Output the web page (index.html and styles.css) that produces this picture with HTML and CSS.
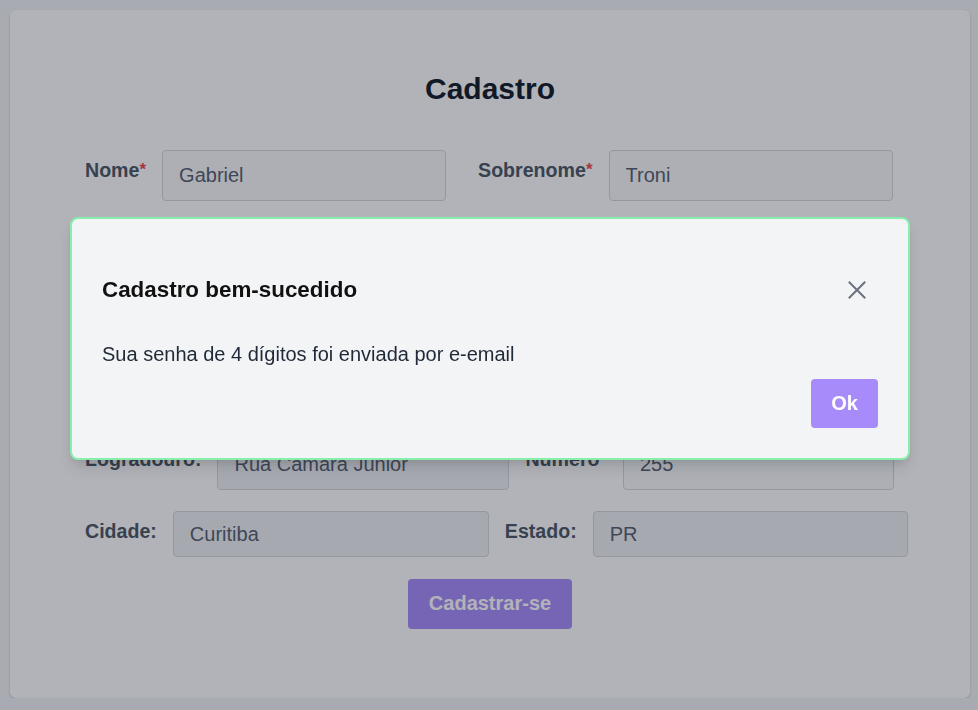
FILE: index.html
```html
<!DOCTYPE html>
<html lang="pt-BR">
<head>
<meta charset="utf-8">
<title>Cadastro</title>
<link rel="stylesheet" href="styles.css">
</head>
<body>
<main class="page">
  <form class="card">
    <h1 class="title">Cadastro</h1>
    <div class="rows">
      <div class="row row-wide-gap">
        <label class="field"><span class="label">Nome<span class="req">*</span></span><input class="input input-name" value="Gabriel"></label>
        <label class="field"><span class="label">Sobrenome<span class="req">*</span></span><input class="input input-name" value="Troni"></label>
      </div>
      <div class="row row-wide-gap">
        <label class="field"><span class="label">E-mail<span class="req">*</span></span><input class="input input-name" value="gabriel@email.com"></label>
        <label class="field"><span class="label">Telefone<span class="req">*</span></span><input class="input input-name" value="(41) 99999-0000"></label>
      </div>
      <div class="row row-wide-gap">
        <label class="field"><span class="label">CPF<span class="req">*</span></span><input class="input input-name" value="000.000.000-00"></label>
        <label class="field"><span class="label">Nascimento<span class="req">*</span></span><input class="input input-name" value="01/01/2000"></label>
      </div>
      <div class="row">
        <label class="field"><span class="label">CEP<span class="req">*</span></span><input class="input input-name" value="80000-000"></label>
      </div>
      <div class="row">
        <label class="field"><span class="label">Logradouro:</span><input class="input input-locked input-street" value="Rua Camara Junior" readonly></label>
        <label class="field"><span class="label label-number">Número</span><input class="input input-number" value="255"></label>
      </div>
      <div class="row">
        <label class="field"><span class="label">Cidade:</span><input class="input input-locked input-compact input-city" value="Curitiba" readonly></label>
        <label class="field"><span class="label">Estado:</span><input class="input input-locked input-compact input-state" value="PR" readonly></label>
      </div>
      <div class="actions">
        <button type="button" class="btn btn-submit">Cadastrar-se</button>
      </div>
    </div>
  </form>
</main>

<div class="overlay">
  <div class="modal" role="dialog">
    <div class="modal-header">
      <h2 class="modal-title">Cadastro bem-sucedido</h2>
      <button type="button" class="close" aria-label="Fechar">
        <svg width="18" height="18" viewBox="0 0 18 18" fill="none" stroke="currentColor" stroke-width="2" stroke-linecap="square"><path d="M1.5 1.5 L16.5 16.5 M16.5 1.5 L1.5 16.5"/></svg>
      </button>
    </div>
    <p class="modal-body">Sua senha de 4 dígitos foi enviada por e-email</p>
    <div class="modal-footer">
      <button type="button" class="btn">Ok</button>
    </div>
  </div>
</div>
</body>
</html>
```
FILE: styles.css
```css
* { box-sizing: border-box; }

html, body {
  margin: 0;
  padding: 0;
  background: #f3f4f6;
  font-family: "Liberation Sans", Arial, sans-serif;
}

.page {
  padding: 10px 8px 0 10px;
}

.card {
  width: 960px;
  background: #ffffff;
  border-radius: 6px;
  box-shadow: 0 1px 3px rgba(0, 0, 0, 0.12), 0 1px 2px rgba(0, 0, 0, 0.08);
  padding: 62px 75px 69px 75px;
}

.title {
  margin: 0 0 44px;
  font-size: 30px;
  line-height: 34px;
  font-weight: 700;
  color: #111827;
  text-align: center;
}

.rows {
  display: flex;
  flex-direction: column;
  gap: 21.3px;
}

.row {
  display: flex;
  align-items: flex-start;
  gap: 16px;
}

.row-wide-gap { gap: 32px; }

.field {
  display: flex;
  align-items: flex-start;
  gap: 16px;
}

.label {
  margin-top: 9px;
  font-size: 19.6px;
  line-height: 22px;
  font-weight: 700;
  color: #4b5563;
  white-space: nowrap;
}

.label-number { margin-right: 7.5px; }

.req {
  color: #ef4444;
  font-size: 17px;
  vertical-align: 2px;
}

.input {
  display: block;
  height: 51px;
  padding: 13px 16px;
  border: 1px solid #d1d5db;
  border-radius: 4px;
  background: #f9fafb;
  font-family: "Liberation Sans", Arial, sans-serif;
  font-size: 20px;
  line-height: 23px;
  color: #565e70;
  outline: none;
}

.input-locked { background: #f0f1f4; }
.input-compact { height: 46px; padding: 10.5px 16px; }

.input-name { width: 284px; }
.input-street { width: 292px; }
.input-number { width: 271px; }
.input-city { width: 316px; }
.input-state { width: 315px; }

.actions {
  display: flex;
  justify-content: center;
}

.btn {
  border: 0;
  border-radius: 4px;
  background: #a78bfa;
  color: #ffffff;
  font-family: "Liberation Sans", Arial, sans-serif;
  font-size: 20px;
  line-height: 23px;
  font-weight: 700;
  padding: 13px 20px;
  cursor: pointer;
}

.btn-submit { padding: 13.5px 20.5px; }

.overlay {
  position: fixed;
  inset: 0;
  background: rgba(17, 24, 39, 0.33);
  display: flex;
  justify-content: center;
  align-items: flex-start;
  padding: 217px 0 0 2px;
}

.modal {
  width: 840px;
  background: #f3f4f6;
  border: 2px solid #86efac;
  border-radius: 8px;
  padding: 30px;
  box-shadow: 0 10px 15px -3px rgba(0, 0, 0, 0.12), 0 4px 6px -2px rgba(0, 0, 0, 0.06);
}

.modal-header {
  display: flex;
  align-items: center;
  justify-content: space-between;
  padding-top: 20px;
}

.modal-title {
  margin: 0;
  font-size: 22.4px;
  line-height: 26px;
  font-weight: 700;
  color: #111111;
}

.close {
  width: 42px;
  height: 42px;
  padding: 12px;
  border: 0;
  background: transparent;
  color: #6b7280;
  display: flex;
  align-items: center;
  justify-content: center;
}

.modal-body {
  margin: 32px 0 0;
  font-size: 20px;
  line-height: 23px;
  color: #1f2937;
}

.modal-footer {
  display: flex;
  justify-content: flex-end;
  margin-top: 13px;
}
```
